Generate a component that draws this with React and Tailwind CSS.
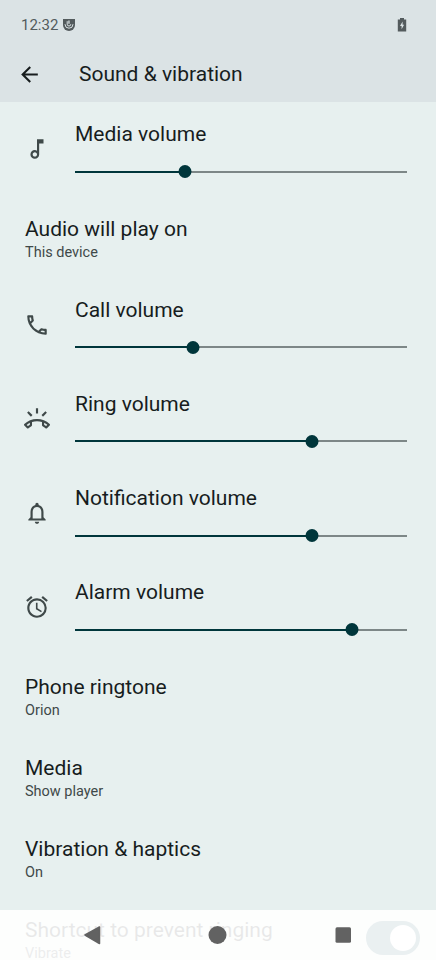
import {
  MdAlarm,
  MdArrowBack,
  MdOutlineCall,
  MdOutlineMusicNote,
  MdOutlineNotifications,
  MdOutlineRingVolume,
} from "react-icons/md";

const VolumeRow = ({ icon: Icon, label, value }) => (
  <div className="flex h-[94.25px] pl-[24px] pr-[29px]">
    <div className="w-[51px] shrink-0 pt-[30px]">
      <Icon className="size-[26px] text-[#3f4949]" />
    </div>
    <div className="flex-1 pt-[14px]">
      <p className="text-[21px] leading-[28px] whitespace-nowrap">{label}</p>
      <div className="relative mt-[17px] h-[13px] flex items-center">
        <div className="h-[2px] w-full bg-[#7d8787]">
          <div className="h-full bg-[#00363b]" style={{ width: `${value}%` }} />
        </div>
        <div
          className="absolute size-[13px] -translate-x-1/2 rounded-full bg-[#00363b]"
          style={{ left: `${value}%` }}
        />
      </div>
    </div>
  </div>
);

const TextRow = ({ title, summary }) => (
  <div className="h-[81px] pl-[25px] pt-[14px]">
    <p className="text-[21px] leading-[28px] whitespace-nowrap">{title}</p>
    <p className="text-[14.5px] leading-[20px] text-[#3f4949]">{summary}</p>
  </div>
);

const StatusBar = () => (
  <div className="flex h-[50px] items-center justify-between pl-[21px] pr-[29px] text-[#535b5d]">
    <div className="flex items-center gap-[5px]">
      <span className="text-[15px] leading-[20px]">12:32</span>
      <svg viewBox="0 0 12 12" className="size-[12px]">
        <path fill="currentColor" d="M0 0h12v6a6 6 0 0 1-12 0z" />
        <path fill="none" stroke="#dbe3e5" strokeWidth="1" d="M2 5.2a4 4 0 0 0 8 0M4.2 2.2v3a1.8 1.8 0 0 0 3.6 0" />
        <path fill="#dbe3e5" d="M5.3 1.5h1.3v3.2H5.3z" />
      </svg>
    </div>
    <svg viewBox="0 0 10 14" className="h-[14px] w-[10px]">
      <path fill="currentColor" d="M3 0h4v1.5h2.2v12H.8v-12H3z" />
      <path fill="#dbe3e5" d="M5.6 3.5 3 8h1.6v3.2L7.1 6.8H5.6z" />
    </svg>
  </div>
);

const NavigationBar = () => (
  <div className="absolute inset-x-0 bottom-0 h-[50px] bg-white/90">
    <svg viewBox="0 0 436 50" className="h-[50px] w-[436px]" fill="#626262">
      <path
        d="M85 25 99.500 17v16.500z"
        stroke="#626262"
        strokeWidth="1.5"
        strokeLinejoin="round"
      />
      <circle cx="217.500" cy="25" r="9" />
      <rect x="335.500" y="17.300" width="15.500" height="15.500" rx="1.500" />
    </svg>
  </div>
);

export default function App() {
  return (
    <div className="relative h-[960px] w-[436px] overflow-hidden bg-[#e7f0ef] font-[Roboto,sans-serif] text-[#171d1e]">
      <header className="h-[102px] bg-[#dbe3e5]">
        <StatusBar />
        <div className="flex h-[48px] items-center pl-[17px]">
          <MdArrowBack className="size-[25px]" />
          <h1 className="ml-[37px] text-[21px] leading-[28px]">Sound &amp; vibration</h1>
        </div>
      </header>

      <main className="pt-[4.25px]">
        <VolumeRow icon={MdOutlineMusicNote} label="Media volume" value={33.2} />
        <TextRow title="Audio will play on" summary="This device" />
        <VolumeRow icon={MdOutlineCall} label="Call volume" value={35.6} />
        <VolumeRow icon={MdOutlineRingVolume} label="Ring volume" value={71.5} />
        <VolumeRow icon={MdOutlineNotifications} label="Notification volume" value={71.5} />
        <VolumeRow icon={MdAlarm} label="Alarm volume" value={83.3} />
        <TextRow title="Phone ringtone" summary="Orion" />
        <TextRow title="Media" summary="Show player" />
        <TextRow title="Vibration & haptics" summary="On" />
        <div className="flex justify-between pr-[16px]">
          <TextRow title="Shortcut to prevent ringing" summary="Vibrate" />
          <div className="mt-[19px] flex h-[34px] w-[54px] items-center justify-end rounded-full bg-[#2d6570] pr-[4px]">
            <div className="size-[26px] rounded-full bg-white" />
          </div>
        </div>
      </main>

      <NavigationBar />
    </div>
  );
}
